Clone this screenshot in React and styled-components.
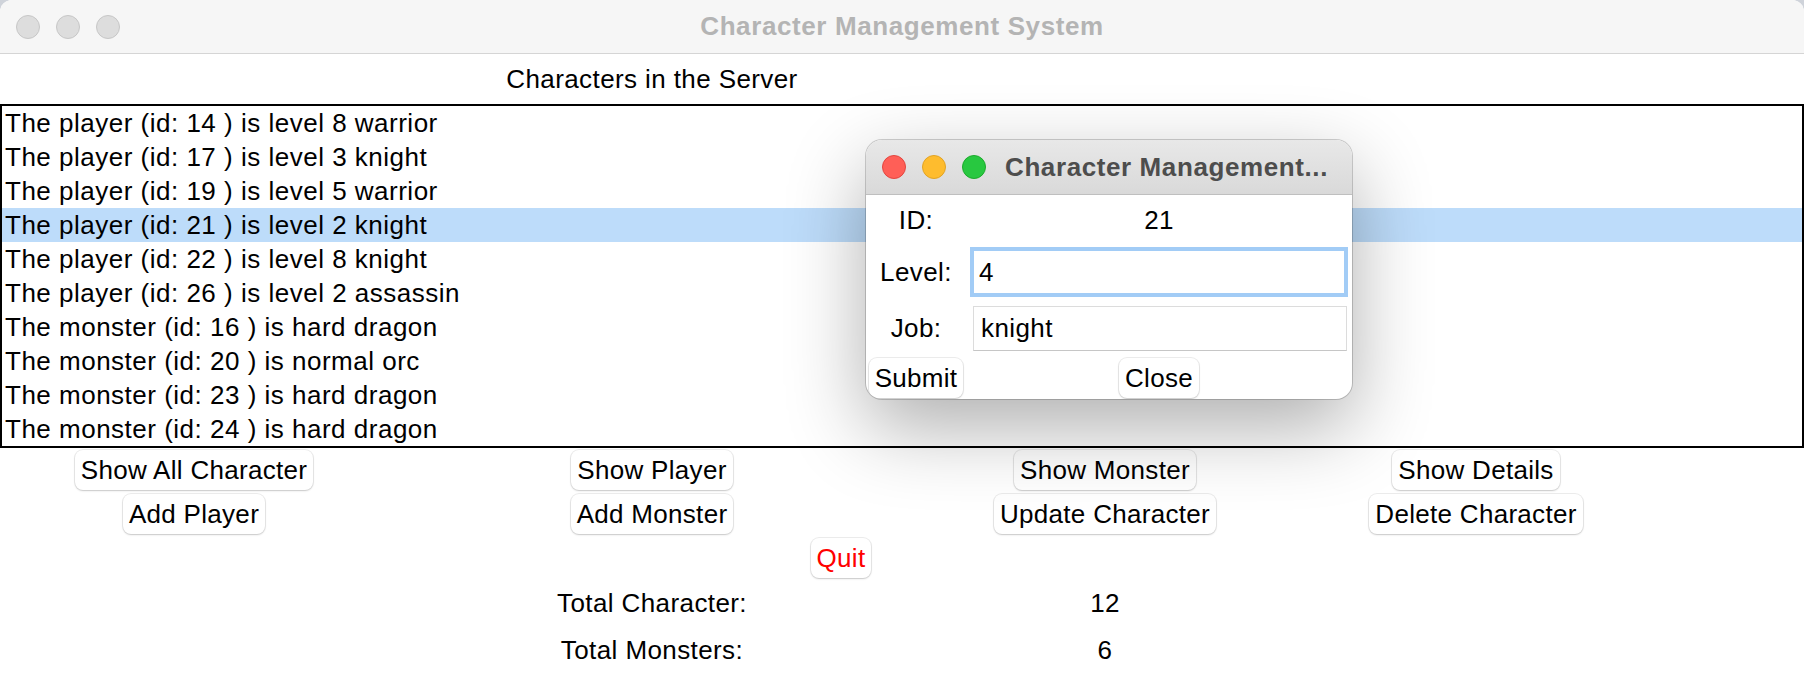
import React from 'react';
import styled, { createGlobalStyle } from 'styled-components';

const GlobalStyle = createGlobalStyle`
  html, body { margin: 0; padding: 0; background: #cfd3da; }
  body { font-family: "Liberation Sans", Arial, sans-serif; color: #000; }
  #root { width: 1804px; height: 674px; overflow: hidden; }
  * { box-sizing: border-box; }
`;

const Window = styled.div`
  position: relative;
  width: 1804px;
  height: 674px;
  background: #fff;
  border-radius: 12px 12px 0 0;
  overflow: hidden;
  display: flex;
  flex-direction: column;
`;

const TitleBar = styled.div`
  flex: none;
  height: 54px;
  padding: 0 16px;
  background: #f6f6f6;
  border-bottom: 1px solid #d5d5d5;
  display: grid;
  grid-template-columns: 1fr auto 1fr;
  align-items: center;
`;

const Lights = styled.div`
  display: flex;
  gap: 16px;
  align-items: center;
`;

const Light = styled.span`
  width: 24px;
  height: 24px;
  border-radius: 50%;
  background: ${p => p.$fill};
  border: 1px solid ${p => p.$edge};
`;

const WindowTitle = styled.div`
  font-size: 26px;
  font-weight: bold;
  letter-spacing: 0.6px;
  color: ${p => p.$color};
  white-space: nowrap;
`;

const Main = styled.div`
  display: grid;
  grid-template-columns: 388px 528px 378px 364px 1fr;
  grid-template-rows: 50px 344px 44px 44px 44px 46px 48px;
  font-size: 26px;
`;

const Caption = styled.div`
  grid-column: ${p => p.$col};
  grid-row: ${p => p.$row};
  justify-self: center;
  align-self: center;
  letter-spacing: 0.4px;
  white-space: nowrap;
`;

const ListBox = styled.div`
  grid-column: 1 / -1;
  grid-row: 2;
  border: 2px solid #000;
  display: flex;
  flex-direction: column;
`;

const ListRow = styled.div`
  height: 34px;
  flex: none;
  display: flex;
  align-items: center;
  padding-left: 3px;
  letter-spacing: 0.5px;
  white-space: nowrap;
  background: ${p => (p.$selected ? '#bddcfa' : 'transparent')};
`;

const Button = styled.button`
  grid-column: ${p => p.$col};
  grid-row: ${p => p.$row};
  justify-self: center;
  align-self: start;
  margin-top: ${p => p.$top ?? 2}px;
  height: 40px;
  padding: 0 6px;
  border: none;
  border-radius: 8px;
  background: #fff;
  box-shadow: 0 0 0 1px rgba(0, 0, 0, 0.07), 0 1px 2px rgba(0, 0, 0, 0.16);
  font-family: "Liberation Sans", Arial, sans-serif;
  font-size: 26px;
  letter-spacing: 0.3px;
  color: ${p => p.$color || '#000'};
  white-space: nowrap;
  cursor: default;
`;

const Dialog = styled.div`
  position: absolute;
  left: 866px;
  top: 140px;
  width: 486px;
  height: 259px;
  border-radius: 16px;
  overflow: hidden;
  background: #fff;
  box-shadow: 0 0 0 1px rgba(0, 0, 0, 0.18), 0 28px 80px rgba(0, 0, 0, 0.32);
  display: flex;
  flex-direction: column;
`;

const DialogBar = styled.div`
  flex: none;
  height: 55px;
  padding: 0 16px;
  display: flex;
  align-items: center;
  gap: 19px;
  background: linear-gradient(#e8e8e8, #d9d9d9);
  border-bottom: 1px solid #bfbfbf;
`;

const DialogBody = styled.div`
  display: grid;
  grid-template-columns: 100px 1fr;
  grid-template-rows: 50px 54px 58px 42px;
  font-size: 26px;
`;

const FieldLabel = styled.div`
  grid-column: ${p => p.$col};
  grid-row: ${p => p.$row};
  justify-self: center;
  align-self: center;
  letter-spacing: 0.4px;
`;

const Entry = styled.input`
  grid-column: 2;
  grid-row: ${p => p.$row};
  align-self: center;
  margin-left: ${p => (p.$focused ? 4 : 7)}px;
  width: ${p => (p.$focused ? 378 : 374)}px;
  height: ${p => (p.$focused ? 50 : 45)}px;
  padding: 0 ${p => (p.$focused ? 5 : 7)}px;
  border: ${p => (p.$focused ? '4px solid #a2ccf6' : '1px solid #dcdcdc')};
  border-bottom-color: ${p => (p.$focused ? '#a2ccf6' : '#c6c6c6')};
  outline: none;
  background: #fff;
  font-family: "Liberation Sans", Arial, sans-serif;
  font-size: 26px;
  letter-spacing: 0.4px;
  color: #000;
`;

const players = [
  'The player (id: 14 ) is level 8 warrior',
  'The player (id: 17 ) is level 3 knight',
  'The player (id: 19 ) is level 5 warrior',
  'The player (id: 21 ) is level 2 knight',
  'The player (id: 22 ) is level 8 knight',
  'The player (id: 26 ) is level 2 assassin',
  'The monster (id: 16 ) is hard dragon',
  'The monster (id: 20 ) is normal orc',
  'The monster (id: 23 ) is hard dragon',
  'The monster (id: 24 ) is hard dragon',
];

export default function App() {
  return (
    <>
      <GlobalStyle />
      <Window>
        <TitleBar>
          <Lights>
            <Light $fill="#dddddd" $edge="#c7c7c7" />
            <Light $fill="#dddddd" $edge="#c7c7c7" />
            <Light $fill="#dddddd" $edge="#c7c7c7" />
          </Lights>
          <WindowTitle $color="#b4b4b4">Character Management System</WindowTitle>
          <div />
        </TitleBar>
        <Main>
          <Caption $col={2} $row={1}>Characters in the Server</Caption>
          <ListBox>
            {players.map((t, i) => (
              <ListRow key={t} $selected={i === 3}>{t}</ListRow>
            ))}
          </ListBox>
          <Button $col={1} $row={3}>Show All Character</Button>
          <Button $col={2} $row={3}>Show Player</Button>
          <Button $col={3} $row={3}>Show Monster</Button>
          <Button $col={4} $row={3}>Show Details</Button>
          <Button $col={1} $row={4}>Add Player</Button>
          <Button $col={2} $row={4}>Add Monster</Button>
          <Button $col={3} $row={4}>Update Character</Button>
          <Button $col={4} $row={4}>Delete Character</Button>
          <Button $col="2 / 4" $row={5} $color="#ff0000">Quit</Button>
          <Caption $col={2} $row={6}>Total Character:</Caption>
          <Caption $col={3} $row={6}>12</Caption>
          <Caption $col={2} $row={7}>Total Monsters:</Caption>
          <Caption $col={3} $row={7}>6</Caption>
        </Main>
        <Dialog>
          <DialogBar>
            <Lights>
              <Light $fill="#ff5f57" $edge="#e2463f" />
              <Light $fill="#febc2e" $edge="#e1a325" />
              <Light $fill="#28c840" $edge="#1daa2c" />
            </Lights>
            <WindowTitle $color="#4d4d4d">Character Management...</WindowTitle>
          </DialogBar>
          <DialogBody>
            <FieldLabel $col={1} $row={1}>ID:</FieldLabel>
            <FieldLabel $col={2} $row={1}>21</FieldLabel>
            <FieldLabel $col={1} $row={2}>Level:</FieldLabel>
            <Entry $row={2} $focused value="4" readOnly />
            <FieldLabel $col={1} $row={3}>Job:</FieldLabel>
            <Entry $row={3} value="knight" readOnly />
            <Button $col={1} $row={4} $top={1}>Submit</Button>
            <Button $col={2} $row={4} $top={1}>Close</Button>
          </DialogBody>
        </Dialog>
      </Window>
    </>
  );
}
